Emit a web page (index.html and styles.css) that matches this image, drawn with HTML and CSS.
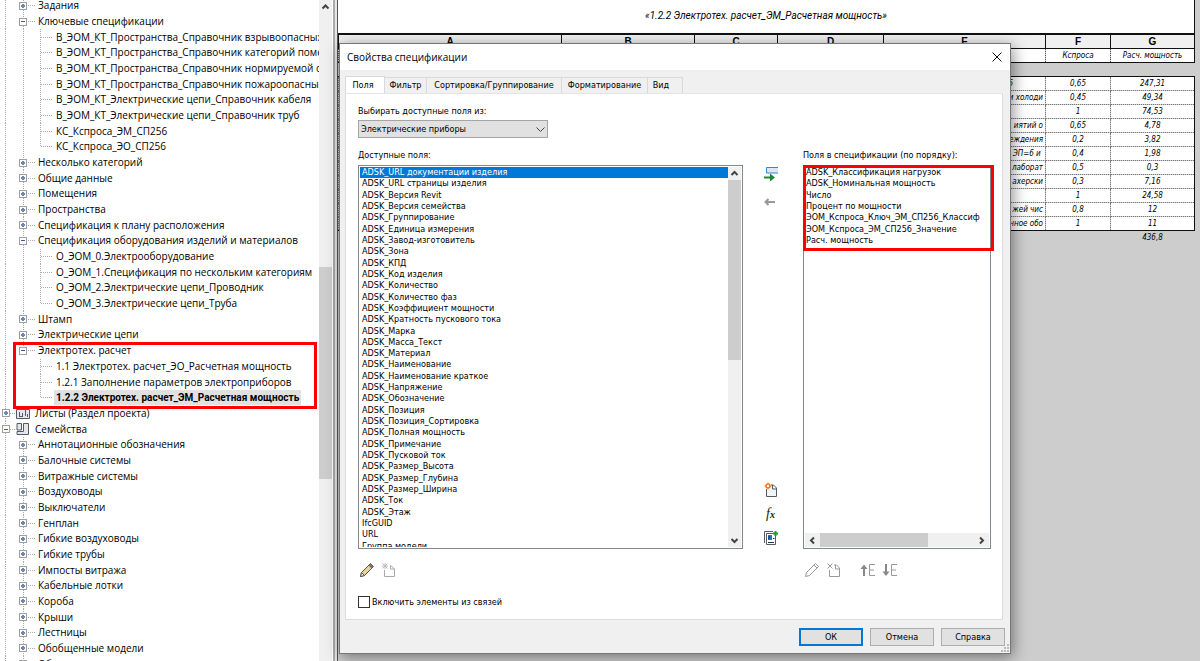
FILE: index.html
```html
<!DOCTYPE html>
<html lang="ru">
<head>
<meta charset="utf-8">
<title>Свойства спецификации</title>
<link rel="stylesheet" href="styles.css">
</head>
<body>
<div class="app">
  <aside class="browser">
    <ul class="tree">
      <li class="l1"><button class="exp plus" aria-label="Развернуть"></button><span>Задания</span></li>
      <li class="l1"><button class="exp" aria-label="Свернуть"></button><span>Ключевые спецификации</span></li>
      <li class="l2"><span>В_ЭОМ_КТ_Пространства_Справочник взрывоопасных</span></li>
      <li class="l2"><span>В_ЭОМ_КТ_Пространства_Справочник категорий поме</span></li>
      <li class="l2"><span>В_ЭОМ_КТ_Пространства_Справочник нормируемой ос</span></li>
      <li class="l2"><span>В_ЭОМ_КТ_Пространства_Справочник пожароопасных</span></li>
      <li class="l2"><span>В_ЭОМ_КТ_Электрические цепи_Справочник кабеля</span></li>
      <li class="l2"><span>В_ЭОМ_КТ_Электрические цепи_Справочник труб</span></li>
      <li class="l2"><span>КС_Кспроса_ЭМ_СП256</span></li>
      <li class="l2 last"><span>КС_Кспроса_ЭО_СП256</span></li>
      <li class="l1"><button class="exp plus" aria-label="Развернуть"></button><span>Несколько категорий</span></li>
      <li class="l1"><button class="exp plus" aria-label="Развернуть"></button><span>Общие данные</span></li>
      <li class="l1"><button class="exp plus" aria-label="Развернуть"></button><span>Помещения</span></li>
      <li class="l1"><button class="exp plus" aria-label="Развернуть"></button><span>Пространства</span></li>
      <li class="l1"><button class="exp plus" aria-label="Развернуть"></button><span>Спецификация к плану расположения</span></li>
      <li class="l1"><button class="exp" aria-label="Свернуть"></button><span>Спецификация оборудования изделий и материалов</span></li>
      <li class="l2"><span>О_ЭОМ_0.Электрооборудование</span></li>
      <li class="l2"><span>О_ЭОМ_1.Спецификация по нескольким категориям</span></li>
      <li class="l2"><span>О_ЭОМ_2.Электрические цепи_Проводник</span></li>
      <li class="l2 last"><span>О_ЭОМ_3.Электрические цепи_Труба</span></li>
      <li class="l1"><button class="exp plus" aria-label="Развернуть"></button><span>Штамп</span></li>
      <li class="l1"><button class="exp plus" aria-label="Развернуть"></button><span>Электрические цепи</span></li>
      <li class="l1 end"><button class="exp" aria-label="Свернуть"></button><span>Электротех. расчет</span></li>
      <li class="l2 tail"><span>1.1 Электротех. расчет_ЭО_Расчетная мощность</span></li>
      <li class="l2 tail"><span>1.2.1 Заполнение параметров электроприборов</span></li>
      <li class="l2 tail last"><span class="current">1.2.2 Электротех. расчет_ЭМ_Расчетная мощность</span></li>
      <li class="l0"><button class="exp plus" aria-label="Развернуть"></button>
        <svg class="node" viewBox="0 0 14 14"><path d="M.5 12.5V3.500h13v9z" fill="#e4e6ea" stroke="#555b66"/><path d="M3.500 10V6M6.500 10V7M3 10.500h4M9.500 4v6M11.500 8v3" stroke="#555b66" fill="none"/></svg><span>Листы (Раздел проекта)</span></li>
      <li class="l0"><button class="exp" aria-label="Свернуть"></button>
        <svg class="node" viewBox="0 0 14 14"><path d="M1 1.500h4.500V8H1zM7.500 1.500h5v11H1V9.500h6.500z" fill="#e4e6ea" stroke="#555b66"/></svg><span>Семейства</span></li>
      <li class="l1"><button class="exp plus" aria-label="Развернуть"></button><span>Аннотационные обозначения</span></li>
      <li class="l1"><button class="exp plus" aria-label="Развернуть"></button><span>Балочные системы</span></li>
      <li class="l1"><button class="exp plus" aria-label="Развернуть"></button><span>Витражные системы</span></li>
      <li class="l1"><button class="exp plus" aria-label="Развернуть"></button><span>Воздуховоды</span></li>
      <li class="l1"><button class="exp plus" aria-label="Развернуть"></button><span>Выключатели</span></li>
      <li class="l1"><button class="exp plus" aria-label="Развернуть"></button><span>Генплан</span></li>
      <li class="l1"><button class="exp plus" aria-label="Развернуть"></button><span>Гибкие воздуховоды</span></li>
      <li class="l1"><button class="exp plus" aria-label="Развернуть"></button><span>Гибкие трубы</span></li>
      <li class="l1"><button class="exp plus" aria-label="Развернуть"></button><span>Импосты витража</span></li>
      <li class="l1"><button class="exp plus" aria-label="Развернуть"></button><span>Кабельные лотки</span></li>
      <li class="l1"><button class="exp plus" aria-label="Развернуть"></button><span>Короба</span></li>
      <li class="l1"><button class="exp plus" aria-label="Развернуть"></button><span>Крыши</span></li>
      <li class="l1"><button class="exp plus" aria-label="Развернуть"></button><span>Лестницы</span></li>
      <li class="l1"><button class="exp plus" aria-label="Развернуть"></button><span>Обобщенные модели</span></li>
      <li class="l1"><button class="exp plus" aria-label="Развернуть"></button><span>Оборудование</span></li>
    </ul>
    <div class="vbar">
      <svg class="arrow" viewBox="0 0 9 9"><path d="M1.500 6.500l3-3 3 3" /></svg>
      <div class="space"></div><div class="thumb"></div><div class="space-after"></div>
    </div>
    <div class="mark mark-tree"></div>
  </aside>

  <main class="sheet">
    <h1 class="sheet-title">«1.2.2 Электротех. расчет_ЭМ_Расчетная мощность»</h1>
    <table class="grid head">
      <colgroup><col class="a"><col class="b"><col class="c"><col class="d"><col class="e"><col class="f"><col class="g"></colgroup>
      <tr class="letters"><th>A</th><th>B</th><th>C</th><th>D</th><th>E</th><th>F</th><th>G</th></tr>
      <tr class="names"><td></td><td></td><td></td><td></td><td></td><td>Кспроса</td><td>Расч. мощность</td></tr>
    </table>
    <table class="grid data">
      <colgroup><col class="a"><col class="b"><col class="c"><col class="d"><col class="e"><col class="f"><col class="g"></colgroup>
      <tr><td></td><td></td><td></td><td></td><td class="short">5</td><td>0,65</td><td>247,31</td></tr>
      <tr><td></td><td></td><td></td><td></td><td>и холоди</td><td>0,45</td><td>49,34</td></tr>
      <tr><td></td><td></td><td></td><td></td><td></td><td>1</td><td>74,53</td></tr>
      <tr><td></td><td></td><td></td><td></td><td>иятий о</td><td>0,65</td><td>4,78</td></tr>
      <tr><td></td><td></td><td></td><td></td><td>еждения</td><td>0,2</td><td>3,82</td></tr>
      <tr><td></td><td></td><td></td><td></td><td>ЭП=6 и&nbsp;</td><td>0,4</td><td>1,98</td></tr>
      <tr><td></td><td></td><td></td><td></td><td>лаборат</td><td>0,5</td><td>0,3</td></tr>
      <tr><td></td><td></td><td></td><td></td><td>ахерски</td><td>0,3</td><td>7,16</td></tr>
      <tr><td></td><td></td><td></td><td></td><td></td><td>1</td><td>24,58</td></tr>
      <tr><td></td><td></td><td></td><td></td><td>жей чис</td><td>0,8</td><td>12</td></tr>
      <tr><td></td><td></td><td></td><td></td><td>нное обо</td><td>1</td><td>11</td></tr>
      <tr class="total"><td></td><td></td><td></td><td></td><td></td><td></td><td>436,8</td></tr>
    </table>
  </main>
</div>

<section class="dialog" role="dialog" aria-labelledby="dlg-title">
  <header class="titlebar">
    <h2 id="dlg-title">Свойства спецификации</h2>
    <button class="close" aria-label="Закрыть"><svg viewBox="0 0 10 10"><path d="M.5 .5l9 9M9.500 .5l-9 9" stroke="#111" fill="none"/></svg></button>
  </header>
  <div class="tabs" role="tablist">
    <button class="tab active" role="tab" aria-selected="true">Поля</button>
    <button class="tab t-filter" role="tab">Фильтр</button>
    <button class="tab t-sort" role="tab">Сортировка/Группирование</button>
    <button class="tab t-format" role="tab">Форматирование</button>
    <button class="tab t-view" role="tab">Вид</button>
  </div>
  <div class="panel">
    <label for="source">Выбирать доступные поля из:</label>
    <div class="combo">
      <select id="source"><option>Электрические приборы</option></select>
      <svg viewBox="0 0 9 9"><path d="M.5 2.500l4 4 4-4" stroke="#444" fill="none"/></svg>
    </div>
    <div class="columns">
      <div class="col-left">
        <span class="caption" id="cap-av">Доступные поля:</span>
        <div class="listbox">
          <ul class="available" role="listbox" aria-labelledby="cap-av">
            <li class="sel" role="option" aria-selected="true">ADSK_URL документации изделия</li>
            <li role="option">ADSK_URL страницы изделия</li>
            <li role="option">ADSK_Версия Revit</li>
            <li role="option">ADSK_Версия семейства</li>
            <li role="option">ADSK_Группирование</li>
            <li role="option">ADSK_Единица измерения</li>
            <li role="option">ADSK_Завод-изготовитель</li>
            <li role="option">ADSK_Зона</li>
            <li role="option">ADSK_КПД</li>
            <li role="option">ADSK_Код изделия</li>
            <li role="option">ADSK_Количество</li>
            <li role="option">ADSK_Количество фаз</li>
            <li role="option">ADSK_Коэффициент мощности</li>
            <li role="option">ADSK_Кратность пускового тока</li>
            <li role="option">ADSK_Марка</li>
            <li role="option">ADSK_Масса_Текст</li>
            <li role="option">ADSK_Материал</li>
            <li role="option">ADSK_Наименование</li>
            <li role="option">ADSK_Наименование краткое</li>
            <li role="option">ADSK_Напряжение</li>
            <li role="option">ADSK_Обозначение</li>
            <li role="option">ADSK_Позиция</li>
            <li role="option">ADSK_Позиция_Сортировка</li>
            <li role="option">ADSK_Полная мощность</li>
            <li role="option">ADSK_Примечание</li>
            <li role="option">ADSK_Пусковой ток</li>
            <li role="option">ADSK_Размер_Высота</li>
            <li role="option">ADSK_Размер_Глубина</li>
            <li role="option">ADSK_Размер_Ширина</li>
            <li role="option">ADSK_Ток</li>
            <li role="option">ADSK_Этаж</li>
            <li role="option">IfcGUID</li>
            <li role="option">URL</li>
            <li role="option">Группа модели</li>
          </ul>
          <div class="vbar">
            <svg class="arrow" viewBox="0 0 9 9"><path d="M1.500 6l3-3 3 3"/></svg>
            <div class="thumb"></div><div class="space-after"></div>
            <svg class="arrow" viewBox="0 0 9 9"><path d="M1.500 3l3 3 3-3"/></svg>
          </div>
        </div>
      </div>
      <div class="col-mid">
        <button class="ico add" aria-label="Добавить поле"><svg viewBox="0 0 14 16"><path d="M14 1.500H2.500v5.500H14" fill="#d9e8f8" stroke="#3b84c8"/><path d="M0 11.500h8" stroke="#1d8a30" stroke-width="2"/><path d="M6 7.500l5 4-5 4z" fill="#1d8a30"/></svg></button>
        <button class="ico" aria-label="Удалить поле"><svg viewBox="0 0 14 16"><path d="M11 8H2M4.500 5L1.500 8l3 3" stroke="#999" stroke-width="2" fill="none"/></svg></button>
        <div class="push"></div>
        <button class="ico" aria-label="Новый параметр"><svg viewBox="0 0 14 16"><path d="M2.500 7v7.500h10V6L9.500 3H7" fill="#f2f4f6" stroke="#555b66"/><path d="M8.500 3v4h4" fill="none" stroke="#555b66"/><circle cx="4" cy="4" r="2" fill="#fff" stroke="#f07818" stroke-width="1.500"/><path d="M4 .5v1M4 6.500v1M.5 4h1M6.500 4h1" stroke="#f07818"/></svg></button>
        <button class="ico fx" aria-label="Вычисляемое значение"><i>f</i><i class="sub">x</i></button>
        <button class="ico" aria-label="Объединить параметры"><svg viewBox="0 0 14 16"><path d="M.5 13V1.500H9" fill="none" stroke="#555b66"/><path d="M2.500 3.500h9v11h-9z" fill="#fff" stroke="#555b66"/><path d="M4 5h4v5H4z" fill="#2d6fc0"/><path d="M5 6v3M4 12.500h6M9 8.500h1.500" stroke="#234"/><path d="M11.500 1v5M9 3.500h5" stroke="#10a818" stroke-width="2"/></svg></button>
      </div>
      <div class="col-right">
        <span class="caption" id="cap-us">Поля в спецификации (по порядку):</span>
        <div class="listbox tall">
          <ul class="used" role="listbox" aria-labelledby="cap-us">
            <li role="option">ADSK_Классификация нагрузок</li>
            <li role="option">ADSK_Номинальная мощность</li>
            <li role="option">Число</li>
            <li role="option">Процент по мощности</li>
            <li role="option">ЭОМ_Кспроса_Ключ_ЭМ_СП256_Классиф</li>
            <li role="option">ЭОМ_Кспроса_ЭМ_СП256_Значение</li>
            <li role="option">Расч. мощность</li>
          </ul>
          <div class="hbar">
            <svg class="arrow" viewBox="0 0 9 9"><path d="M6 1.500l-3 3 3 3"/></svg>
            <div class="hthumb"></div><div class="hspace"></div>
            <svg class="arrow" viewBox="0 0 9 9"><path d="M3 1.500l3 3-3 3"/></svg>
          </div>
          <div class="mark mark-fields"></div>
        </div>
      </div>
    </div>
    <div class="tools">
      <div class="tools-left">
        <button class="ico" aria-label="Изменить"><svg viewBox="0 0 16 16"><path d="M1.500 14.500l1-4 9-9 3 3-9 9z" fill="#ecd09a" stroke="#555"/><path d="M9.500 3.500l3 3 2-2-3-3z" fill="#777"/><path d="M1.500 14.500l1-4 3 3z" fill="#fff" stroke="#555"/></svg></button>
        <button class="ico" aria-label="Удалить"><svg viewBox="0 0 16 16"><path d="M3.500 8v6.500h10V7l-3-3H9M9.500 3.500V7h4" fill="none" stroke="#aaa"/><path d="M1.500 1.500l5 5M6.500 1.500l-5 5M4 1v6M1 4h6" stroke="#bbb"/></svg></button>
      </div>
      <div class="tools-right">
        <button class="ico" aria-label="Изменить"><svg viewBox="0 0 16 16"><path d="M1.500 14.500l1-4 9-9 3 3-9 9zM10 3l3 3" fill="none" stroke="#999"/></svg></button>
        <button class="ico" aria-label="Удалить"><svg viewBox="0 0 16 16"><path d="M3.500 8v6.500h10V6l-3-3H8M9.500 3v4h4" fill="none" stroke="#999"/><path d="M1.500 1.500l5 5M6.500 1.500l-5 5" stroke="#999"/></svg></button>
        <button class="ico up" aria-label="Вверх"><svg viewBox="0 0 16 16"><path d="M4 14V5" stroke="#888" stroke-width="2"/><path d="M0.500 7L4 2.500 7.500 7z" fill="#888"/><path d="M15 2.500H9.500v11H15M9.500 8H14" fill="none" stroke="#999"/></svg></button>
        <button class="ico" aria-label="Вниз"><svg viewBox="0 0 16 16"><path d="M4 2v9" stroke="#888" stroke-width="2"/><path d="M.5 9.500L4 14l3.500-4.500z" fill="#888"/><path d="M15 2.500H9.500v11H15M9.500 8H14" fill="none" stroke="#999"/></svg></button>
      </div>
    </div>
    <label class="check"><input type="checkbox"><span>Включить элементы из связей</span></label>
  </div>
  <footer class="actions">
    <button class="btn primary">ОК</button>
    <button class="btn">Отмена</button>
    <button class="btn">Справка</button>
  </footer>
  <svg class="grip" viewBox="0 0 8 8"><path d="M6 0h2v2H6zM3 3h2v2H3zM6 3h2v2H6zM0 6h2v2H0zM3 6h2v2H3zM6 6h2v2H6z" fill="#bbb"/></svg>
</section>
</body>
</html>
```
FILE: styles.css
```css
* { box-sizing: border-box; }
body {
  margin: 0;
  height: 100vh;
  overflow: hidden;
  position: relative;
  background: #cdcdcd;
  color: #000;
  font-family: "DejaVu Sans Condensed", "DejaVu Sans", sans-serif;
  font-size: 9px;
}
ul { list-style: none; margin: 0; padding: 0; }
button { font: inherit; color: inherit; padding: 0; border: 0; background: none; }
h1, h2 { margin: 0; font-weight: normal; }
svg { display: block; }

.app { display: flex; height: 100vh; overflow: hidden; }

/* project browser */
.browser {
  position: relative;
  flex: none;
  width: 338px;
  display: flex;
  background: linear-gradient(90deg, #f0f0f0 0 332px, #fff 332px 333px, #aaa 333px 335px, #e8e8e8 335px 337px, #555 337px);
}
.tree {
  width: 319px;
  height: calc(100vh + 13px);
  margin-top: -2px;
  background: #fff;
  display: grid;
  grid-auto-rows: 1fr;
  overflow: hidden;
  font-family: "Open Sans", "Noto Sans", sans-serif;
  font-size: 10px;
  line-height: 15px;
}
.tree li {
  --v: repeating-linear-gradient(180deg, #aaa 0 1px, #fff 1px 2px);
  --h: repeating-linear-gradient(90deg, #aaa 0 1px, #fff 1px 2px);
  display: flex;
  align-items: center;
  min-height: 0;
  white-space: nowrap;
  background-repeat: no-repeat;
}
.l0 {
  padding-left: 2px;
  background-image: var(--v), var(--h);
  background-size: 1px 100%, 8px 1px;
  background-position: 5px 0, 8px 50%;
}
.l1 {
  padding-left: 19px;
  background-image: var(--v), var(--v), var(--h);
  background-size: 1px 100%, 1px 100%, 10px 1px;
  background-position: 5px 0, 23px 0, 26px 50%;
}
.l1.end { background-size: 1px 100%, 1px 50%, 10px 1px; }
.l2 {
  padding-left: 54px;
  background-image: var(--v), var(--v), var(--h), var(--v);
  background-size: 1px 100%, 1px 100%, 12px 1px, 1px 100%;
  background-position: 5px 0, 40px 0, 41px 50%, 23px 0;
}
.l2.last { background-size: 1px 100%, 1px 50%, 12px 1px, 1px 100%; }
.l2.tail { background-image: var(--v), var(--v), var(--h); }
.l2 span { padding: 0 2px; }
.l2 .current { background: #e1e1e1; font-family: Roboto, sans-serif; font-weight: bold; }
.exp {
  flex: none;
  width: 8px;
  height: 8px;
  border: 1px solid #a0a0a0;
  background: linear-gradient(#3c5a9c, #3c5a9c) center / 4px 1px no-repeat, #fff;
}
.exp.plus {
  background: linear-gradient(#6f86b8, #6f86b8) center / 4px 2px no-repeat, linear-gradient(#6f86b8, #6f86b8) center / 2px 4px no-repeat, #fff;
}
.l1 .exp { margin-right: 11px; }
.l0 .exp { margin-right: 6px; }
.node { width: 14px; height: 14px; margin-right: 5px; }

/* scroll bars */
.vbar {
  flex: none;
  width: 13px;
  display: flex;
  flex-direction: column;
  align-items: center;
  background: #f0f0f0;
}
.arrow { width: 9px; height: 9px; margin: 2px; flex: none; }
.arrow path { fill: none; stroke: #444; stroke-width: 2; }
.thumb { width: 100%; background: #cdcdcd; }
.browser .space { flex: 254; }
.browser .thumb { flex: 212; }
.browser .space-after { flex: 182; }

.mark { position: absolute; border: 3px solid #fe0000; }
.mark-tree { left: 13px; top: 342px; right: 21px; height: 67px; }

/* schedule sheet */
.sheet {
  flex: 1;
  padding-right: 5px;
  font-style: italic;
}
.sheet-title {
  height: 34px;
  border-right: 1px solid #111;
  border-bottom: 1px solid #111;
  background: #fff;
  text-align: center;
  line-height: 32px;
  font-family: Roboto, "Liberation Sans", sans-serif;
  font-size: 10px;
}
.grid {
  width: 100%;
  table-layout: fixed;
  border-collapse: collapse;
  font-size: 8px;
}
.a { width: 223px; }
.b { width: 133px; }
.c { width: 83px; }
.d { width: 106px; }
.f { width: 65px; }
.g { width: 84px; }
.grid td, .grid th { padding: 0; height: 14px; line-height: 12px; text-align: center; white-space: nowrap; overflow: hidden; }
.letters th {
  background: #f0f0f0;
  border: 1px solid #111;
  font-family: "Liberation Sans", sans-serif;
  font-style: normal;
  font-size: 10px;
}
.names td { background: #fff; border: 1px solid #111; border-left: 1px dotted #555; border-right: 1px dotted #555; }
.names td:last-child { border-right: 1px solid #111; }
.data { margin-top: 13px; border-top: 1px solid #111; }
.data td { background: #fff; border: 1px dotted #777; }
.data tr:first-child td { border-top: 1px solid #111; }
.data td:last-child { border-right: 1px solid #111; }
.data td:nth-child(5) { text-align: right; padding-right: 2px; }
.data td.short:nth-child(5) { padding-right: 32px; }
.data .total td { background: none; border: 0; border-top: 1px solid #111; }

/* dialog */
.dialog {
  position: absolute;
  left: 339px;
  top: 43px;
  right: 189px;
  bottom: 7px;
  display: flex;
  flex-direction: column;
  background: #f0f0f0;
  border: 1px solid #777;
  box-shadow: 2px 3px 14px rgba(0, 0, 0, .45);
}
.titlebar {
  display: flex;
  justify-content: space-between;
  align-items: center;
  height: 26px;
  padding: 0 8px 0 7px;
  background: #fff;
}
.titlebar h2 { font-family: "Open Sans", "Noto Sans", sans-serif; font-size: 10px; }
.close svg { width: 10px; height: 10px; }
.tabs { display: flex; align-items: flex-end; height: 23px; padding: 0 5px; }
.tab { height: 16px; line-height: 15px; white-space: nowrap; border: 1px solid #d9d9d9; border-left: 0; border-bottom: 0; }
.tab.active { width: 40px; height: 18px; margin-bottom: -1px; padding-right: 4px; background: #fff; border-left: 1px solid #d9d9d9; }
.t-filter { width: 42px; }
.t-sort { width: 135px; }
.t-format { width: 86px; }
.t-view { width: 35px; padding-right: 8px; }
.panel {
  flex: 1;
  min-height: 0;
  display: flex;
  flex-direction: column;
  align-items: flex-start;
  margin: 0 7px 0 5px;
  padding: 11px 11px 11px 12px;
  background: #fff;
  border: 1px solid #dcdcdc;
  border-top-color: #e4e4e4;
}
.panel label, .caption { line-height: 12px; }
.combo { position: relative; width: 190px; margin-top: 3px; }
.combo select {
  appearance: none;
  width: 100%;
  height: 18px;
  padding: 0 2px;
  border: 1px solid #a5a5a5;
  border-radius: 0;
  background: #e1e1e1;
  color: #000;
  font: inherit;
}
.combo svg { position: absolute; right: 3px; top: 5px; width: 9px; height: 9px; pointer-events: none; }
.columns { flex: 1; min-height: 0; align-self: stretch; display: flex; margin-top: 11px; }
.col-left { flex: 385; min-width: 0; display: flex; flex-direction: column; }
.col-right { flex: 188; min-width: 0; display: flex; flex-direction: column; }
.listbox { position: relative; flex: 1; min-height: 0; margin-top: 4px; display: flex; border: 1px solid #82868f; padding: 1px; }
.available { flex: 1; display: grid; grid-auto-rows: 1fr; margin-bottom: -5px; clip-path: inset(0 0 5px 0); line-height: 11px; }
.available li { min-height: 0; padding: 0 2px; }
.sel { background: #0078d7; color: #fff; }
.listbox .thumb { flex: 178; }
.listbox .space-after { flex: 172; }
.col-mid { width: 60px; display: flex; flex-direction: column; align-items: center; padding: 17px 5px 3px 0; gap: 8px; }
.col-mid .add { margin-bottom: 4px; }
.col-mid .push { flex: 1; }
.ico { width: 16px; height: 16px; }
.ico svg { width: 16px; height: 16px; }
.col-mid .ico { width: 14px; }
.col-mid .ico svg { width: 14px; }
.fx { font-family: "Liberation Serif", serif; font-size: 14px; line-height: 14px; color: #222; }
.fx .sub { font-size: 10px; font-weight: bold; }
.tall { flex-direction: column; }
.used { flex: 1; display: grid; grid-auto-rows: 3.1%; line-height: 11px; overflow: hidden; white-space: nowrap; padding-left: 1px; }
.hbar { display: flex; align-items: center; height: 14px; background: #f0f0f0; }
.hbar .arrow { margin: 0 3px; }
.hthumb { flex: 110; height: 100%; background: #cdcdcd; }
.hspace { flex: 47; }
.mark-fields { left: -1px; right: -4px; top: -1px; height: 86px; }
.tools { align-self: stretch; display: flex; margin-top: 13px; padding-left: 1px; }
.tools-left { flex: 445; display: flex; gap: 6px; }
.tools-right { flex: 187; display: flex; gap: 6px; }
.up { margin-left: 12px; }
.check { display: flex; align-items: center; gap: 2px; margin-top: 18px; }
.check input { appearance: none; width: 12px; height: 12px; margin: 0; border: 1px solid #333; background: #fff; }
.actions { display: flex; justify-content: flex-end; gap: 7px; padding: 8px 5px 7px; }
.btn { width: 64px; height: 18px; line-height: 14px; background: #e1e1e1; border: 1px solid #adadad; }
.btn.primary { border: 2px solid #0078d7; }
.grip { position: absolute; right: 1px; bottom: 1px; width: 8px; height: 8px; }
```
